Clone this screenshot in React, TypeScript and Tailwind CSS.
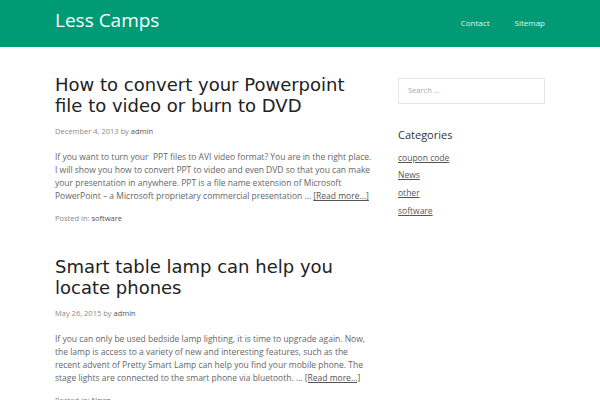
const posts = [
  {
    title: "How to convert your Powerpoint file to video or burn to DVD",
    date: "December 4, 2013",
    excerpt:
      "If you want to turn your \u00a0PPT files to AVI video format? You are in the right place. I will show you how to convert PPT to video and even DVD so that you can make your presentation in anywhere. PPT is a file name extension of Microsoft PowerPoint \u2013 a Microsoft proprietary commercial presentation \u2026",
    category: "software",
  },
  {
    title: "Smart table lamp can help you locate phones",
    date: "May 26, 2015",
    excerpt:
      "If you can only be used bedside lamp lighting, it is time to upgrade again. Now, the lamp is access to a variety of new and interesting features, such as the recent advent of Pretty Smart Lamp can help you find your mobile phone. The stage lights are connected to the smart phone via bluetooth. \u2026",
    category: "News",
  },
];

const categories = ["coupon code", "News", "other", "software"];

const body = "font-['Open_Sans',sans-serif]";

export default function App() {
  return (
    <div className={`h-[400px] overflow-hidden bg-white ${body}`}>
      <header className="h-[47px] bg-[#009a74]">
        <div className="mx-auto flex h-full w-[490px] items-center justify-between">
          <a className="pb-[6px] text-[19px] text-white">Less Camps</a>
          <nav className="flex gap-[25px] pb-[1px] text-[8px] text-[#e6f5f0]">
            <a>Contact</a>
            <a>Sitemap</a>
          </nav>
        </div>
      </header>

      <div className="mx-auto flex w-[490px] justify-between pt-[27px]">
        <main className="w-[318px]">
          {posts.map((p) => (
            <article key={p.title} className="mb-[31px]">
              <h2 className="font-['DejaVu_Sans',sans-serif] text-[18px] leading-[21px] text-[#222]">
                {p.title}
              </h2>
              <p className="mt-[10px] text-[7.5px] text-[#888]">
                {p.date} by <span className="text-[#555]">admin</span>
              </p>
              <p className="mt-[13px] text-[8.5px] leading-[13px] text-[#666]">
                {p.excerpt}{" "}
                <a className="text-[#555] underline">[Read more…]</a>
              </p>
              <p className="mt-[11px] text-[7.5px] text-[#888]">
                Posted in: <span className="text-[#555]">{p.category}</span>
              </p>
            </article>
          ))}
        </main>

        <aside className="w-[147px] pt-[4px]">
          <div className="flex h-[26px] items-center border border-[#e6e6e6] px-[9px] text-[7.5px] text-[#aaa]">
            Search …
          </div>
          <h3 className="mt-[23px] text-[11px] text-[#333]">Categories</h3>
          <ul className="mt-[8px] flex flex-col gap-[5px] text-[8.5px] text-[#555]">
            {categories.map((c) => (
              <li key={c}>
                <a className="underline">{c}</a>
              </li>
            ))}
          </ul>
        </aside>
      </div>
    </div>
  );
}
